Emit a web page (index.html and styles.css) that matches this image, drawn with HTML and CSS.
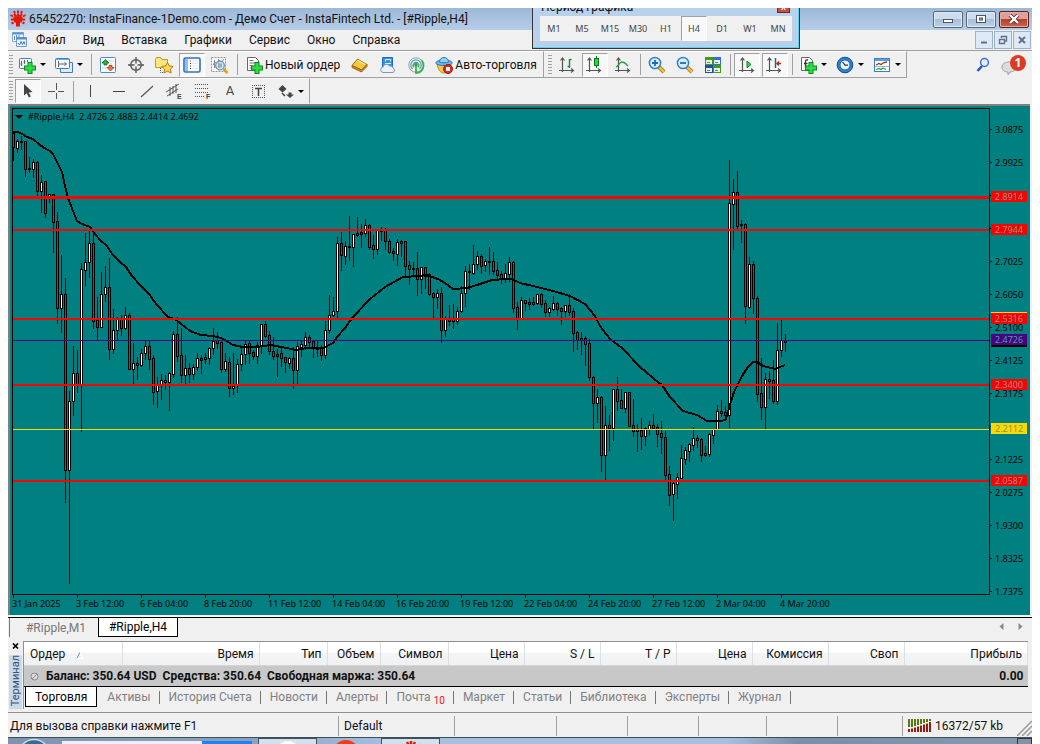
FILE: index.html
```html
<!DOCTYPE html>
<html lang="ru">
<head>
<meta charset="utf-8">
<title>InstaFinance-1Demo.com</title>
<link rel="stylesheet" href="styles.css">
</head>
<body>
<div class="app">
  <header class="titlebar">
    <svg class="logo" width="18" height="18" viewBox="0 0 18 18"><g fill="none" stroke="#e3170a" stroke-width="2"><path d="M9 4v12M4.500 7.500h3.500v9M13.500 7.500H10v9M5 4l2.500 2.500M13 4l-2.500 2.500M2 9.500h4v3M16 9.500h-4v3M2.500 13.500l2-1M15.500 13.500l-2-1M9 .5v3M5 1l1 2.500M13 1l-1 2.500M1.500 5l2.500 1.500M16.500 5L14 6.500"/></g></svg>
    <h1 class="title">65452270: InstaFinance-1Demo.com - Демо Счет - InstaFintech Ltd. - [#Ripple,H4]</h1>
    <div class="winbtns">
      <button class="wb" aria-label="Свернуть"><svg width="12" height="10" viewBox="0 0 12 10"><rect x="1.500" y="5.500" width="9" height="3" fill="#fff" stroke="#4a5666"/></svg></button>
      <button class="wb" aria-label="Развернуть"><svg width="12" height="10" viewBox="0 0 12 10"><rect x="1.500" y="1.500" width="9" height="7" fill="#fff" stroke="#4a5666"/><rect x="4.500" y="4" width="3" height="2" fill="#9bb4d0" stroke="#4a5666"/></svg></button>
      <button class="wb wb-close" aria-label="Закрыть"><svg width="12" height="10" viewBox="0 0 12 10"><path d="M2 1l8 8M10 1L2 9" stroke="#5a2a28" stroke-width="4"/><path d="M2 1l8 8M10 1L2 9" stroke="#fff" stroke-width="2.400"/></svg></button>
    </div>
  </header>

  <nav class="menubar">
    <svg width="16" height="16" viewBox="0 0 16 16"><path d="M.5.500h11v9H.5z" fill="#eef5fd" stroke="#7fa9d8"/><path d="M.5 1.500h11" stroke="#5c95d6" stroke-width="2"/><path d="M2.500 4v4M4.500 3v4M7 3v4" stroke="#6a8ab0"/><path d="M4.500 5.500h10v9h-10z" fill="#eef5fd" stroke="#6a9ad4"/><path d="M4.500 6.500h10" stroke="#4f8cd4" stroke-width="2"/><path d="M6 11l1.500 2L9 9.500l1.500 3L12 9.500l1 3" fill="none" stroke="#3f72b8"/></svg>
    <a href="#">Файл</a><a href="#">Вид</a><a href="#">Вставка</a><a href="#">Графики</a><a href="#">Сервис</a><a href="#">Окно</a><a href="#">Справка</a>
    <div class="mdibtns">
      <button class="mb" aria-label="Свернуть окно"><svg width="10" height="10" viewBox="0 0 10 10"><path d="M2 7.500h6" stroke="#5f7287" stroke-width="2"/></svg></button>
      <button class="mb" aria-label="Восстановить окно"><svg width="10" height="10" viewBox="0 0 10 10"><path d="M3.500 3V1.500h5V6H7" fill="none" stroke="#5f7287" stroke-width="1.400"/><path d="M1.500 4.500h5v4h-5z" fill="none" stroke="#5f7287" stroke-width="1.400"/></svg></button>
      <button class="mb" aria-label="Закрыть окно"><svg width="10" height="10" viewBox="0 0 10 10"><path d="M2 2l6 6M8 2L2 8" stroke="#5f7287" stroke-width="2"/></svg></button>
    </div>
  </nav>

  <div class="toolrow">
    <div class="toolbar">
      <i class="grip"></i>
      <button class="tb wide" aria-label="Новый график"><svg width="18" height="18" viewBox="0 0 18 18"><rect x="1.500" y="2.500" width="12" height="10" rx="1" fill="#f4f8fc" stroke="#3f7fc0"/><path d="M3.500 5v5M2.500 8h2M6.500 4v4M5.500 6h2M9.500 4v2" stroke="#667"/><path d="M12 6v12M6 12h12" stroke="#0a8a1e" stroke-width="5"/><path d="M12 7v10M7 12h10" stroke="#2fdc44" stroke-width="3"/></svg><i class="caret"></i></button>
      <button class="tb wide" aria-label="Профили"><svg width="18" height="18" viewBox="0 0 18 18"><path d="M5.500 16.500v-10h12v10z" fill="#dcecf9" stroke="#3f7fc0"/><rect x=".5" y="2.500" width="14" height="10" rx="1" fill="#f4f8fc" stroke="#3f7fc0"/><path d="M1 3.500h13" stroke="#6cabe6"/><path d="M3.500 5v6M3.500 8h8M9.500 6.500l2 1.500-2 1.500" stroke="#667" fill="none"/></svg><i class="caret"></i></button>
      <i class="sep"></i>
      <button class="tb" aria-label="Обзор рынка"><svg width="18" height="18" viewBox="0 0 18 18"><rect x="1.500" y="1.500" width="15" height="15" rx="1" fill="#fff" stroke="#4a8ad0"/><path d="M10 5h5M3 12h5M10 8h3" stroke="#c4d0dc"/><path d="M6.500 3.500l3.500 3.500h-2v2h-3V7H3z" fill="#28b43a" stroke="#0a7020" stroke-width=".8"/><path d="M11.500 15L8 11.500h2v-2h3v2h2z" fill="#f07848" stroke="#b03010" stroke-width=".8"/></svg></button>
      <button class="tb" aria-label="Окно данных"><svg width="18" height="18" viewBox="0 0 18 18"><circle cx="9" cy="9" r="5.300" fill="none" stroke="#555" stroke-width="1.400"/><path d="M9 1v6.500M9 10.500V17M1 9h6.500M10.500 9H17" stroke="#555" stroke-width="1.400"/></svg></button>
      <button class="tb" aria-label="Избранное"><svg width="20" height="18" viewBox="0 0 20 18"><path d="M1.500 3.500v8h9l3-2V3.500H8L6.500 1.500h-4z" fill="#ffe680" stroke="#c49a1c"/><path d="M6.500 12v4.500h3" fill="none" stroke="#555" stroke-dasharray="1 1"/><path d="M13.500 6.500l1.800 3.400 3.900.5-2.800 2.700.7 3.900-3.600-1.800L10 17l.6-3.900-2.800-2.700 3.900-.5z" fill="#ffd65a" stroke="#a87c10"/></svg></button>
      <button class="tb on" aria-label="Навигатор"><svg width="18" height="16" viewBox="0 0 18 16"><rect x="1" y="1" width="16" height="14" rx="1.500" fill="#fff" stroke="#2f6fc4" stroke-width="1.600"/><path d="M2 2h3v12H2z" fill="#8fbdf4"/><path d="M7 4h1" stroke="#d84030"/><path d="M7 6.500h1M7 9h1M7 11.500h1" stroke="#333"/><path d="M9 4h6M9 6.500h6M9 9h6M9 11.500h6" stroke="#e0e8f2"/></svg></button>
      <button class="tb" aria-label="Тестер стратегий"><svg width="20" height="18" viewBox="0 0 20 18"><rect x="1.500" y="1.500" width="14" height="14" fill="#fbfbf8" stroke="#9a9a90" stroke-dasharray="2 1"/><path d="M3 9l2-3 2 2 2-4 2 3 3-4M4.500 4v8M8.500 3v8" fill="none" stroke="#8a8f98"/><circle cx="10" cy="9.500" r="4.300" fill="#cfe8fb" fill-opacity=".8" stroke="#5f92c4" stroke-width="1.300"/><path d="M9 7v5M11 7.500v4" stroke="#667"/><path d="M13.500 13l4 4" stroke="#d8a11c" stroke-width="2.600"/></svg></button>
      <i class="sep"></i>
      <button class="tb text" aria-label="Новый ордер"><svg width="18" height="18" viewBox="0 0 18 18"><path d="M2.500 1.500h8l3 3v10h-11z" fill="#fff" stroke="#666"/><path d="M4.500 4.500h4M4.500 7h6M4.500 9.500h3M4.500 12h3" stroke="#777"/><path d="M12 6v12M6 12h12" stroke="#0a8a1e" stroke-width="5"/><path d="M12 7v10M7 12h10" stroke="#2fdc44" stroke-width="3"/></svg>Новый ордер</button>
      <button class="tb" aria-label="MetaEditor"><svg width="18" height="18" viewBox="0 0 18 18"><path d="M1 9.500L6.500 3 16 8.500 10.500 14z" fill="#f5c840" stroke="#a8780c"/><path d="M1 9.500v2l9.500 4.500 5.500-5.500v-2L10.500 14z" fill="#d08a1c" stroke="#8a5a08" stroke-width=".8"/><path d="M7 4.500l7 4" stroke="#ffe9a0" stroke-width="1.400"/></svg></button>
      <button class="tb" aria-label="Маркет"><svg width="18" height="18" viewBox="0 0 18 18"><path d="M3.500 1.500h10v10h-10z" fill="#2f92e8" stroke="#1c6cc0"/><path d="M6.500 5.500v-2h5v2M6 7.500h6" stroke="#e6f4ff" fill="none"/><path d="M4 16.500a2.800 2.800 0 010-5.500 3.500 3.500 0 016.500-1 3 3 0 013.500 2 2.400 2.400 0 010 4.500z" fill="#e9f0f8" stroke="#7f97b8"/></svg></button>
      <button class="tb" aria-label="Сигналы"><svg width="18" height="18" viewBox="0 0 18 18"><circle cx="9" cy="9" r="7.200" fill="#eef3f6" stroke="#8aa4b8"/><path d="M5.500 13a5.200 5.200 0 117 0" fill="none" stroke="#6aa0c0" stroke-width="1.300"/><path d="M7 11.300a2.800 2.800 0 114 0" fill="none" stroke="#48a060" stroke-width="1.300"/><path d="M9 9v8c4 0 7.500-3 7.500-7a8 8 0 00-2-6" fill="none" stroke="#39b54a" stroke-width="1.800"/><circle cx="9" cy="8.800" r="1.700" fill="#2f9a40"/></svg></button>
      <button class="tb text" aria-label="Авто-торговля"><svg width="18" height="18" viewBox="0 0 18 18"><path d="M2 8c1 5 3 9 7 9s7-4 7-9z" fill="#f6c94a" stroke="#b8861c"/><ellipse cx="9" cy="6.800" rx="8.200" ry="2.800" fill="#6cb6ea" stroke="#2c78b4"/><path d="M4.500 6c0-3 2-4.500 4.500-4.500S13.500 3 13.500 6c-2 1-7 1-9 0z" fill="#8fcdf5" stroke="#2c78b4"/><circle cx="13" cy="13" r="4.500" fill="#e02a18" stroke="#a81408"/><rect x="11" y="11" width="4" height="4" fill="#fff"/></svg>Авто-торговля</button>
    </div>
    <div class="toolbar tight">
      <i class="grip"></i>
      <button class="tb" aria-label="Бары"><svg width="18" height="18" viewBox="0 0 18 18"><path d="M4.500 2v14M1 14.500h14M2.500 4.500l2-2.500 2 2.500M13 12.500l2.500 2-2.500 2" fill="none" stroke="#555" stroke-width="1.200"/><path d="M11.500 3v9M11.500 3.500h2M9.500 10.500h2" stroke="#1c8a2c" stroke-width="1.400"/></svg></button>
      <button class="tb on" aria-label="Свечи"><svg width="18" height="18" viewBox="0 0 18 18"><path d="M3.500 2v14M0 14.500h14M1.500 4.500l2-2.500 2 2.500M12 12.500l2.500 2-2.500 2" fill="none" stroke="#555" stroke-width="1.200"/><path d="M10.500 0v12" stroke="#0c7a1c"/><rect x="8.500" y="2.500" width="4" height="7" fill="#2fd04a" stroke="#0c7a1c"/></svg></button>
      <button class="tb" aria-label="Линия"><svg width="18" height="18" viewBox="0 0 18 18"><path d="M4.500 2v14M1 14.500h14M2.500 4.500l2-2.500 2 2.500M13 12.500l2.500 2-2.500 2" fill="none" stroke="#555" stroke-width="1.200"/><path d="M2 11c3-1 3-5 6-5 3 0 4 2 6 4" fill="none" stroke="#2a9a3c" stroke-width="1.300"/></svg></button>
      <i class="sep"></i>
      <button class="tb" aria-label="Увеличить"><svg width="18" height="18" viewBox="0 0 18 18"><path d="M11 11l5 5" stroke="#a87a10" stroke-width="4"/><path d="M11 11l5 5" stroke="#ecc84a" stroke-width="2.400"/><circle cx="7" cy="7" r="5.600" fill="#d6edfc" stroke="#2f7fd0" stroke-width="1.500"/><path d="M4 7h6M7 4v6" stroke="#2468b4" stroke-width="1.800"/></svg></button>
      <button class="tb" aria-label="Уменьшить"><svg width="18" height="18" viewBox="0 0 18 18"><path d="M11 11l5 5" stroke="#a87a10" stroke-width="4"/><path d="M11 11l5 5" stroke="#ecc84a" stroke-width="2.400"/><circle cx="7" cy="7" r="5.600" fill="#d6edfc" stroke="#2f7fd0" stroke-width="1.500"/><path d="M4 7h6" stroke="#2468b4" stroke-width="1.800"/></svg></button>
      <button class="tb" aria-label="Мозаика"><svg width="18" height="18" viewBox="0 0 18 18"><path d="M1 1h8v8H1zM9 9h8v8H9z" fill="#3f9c14"/><path d="M9 1h8v8H9z" fill="#2f6ee0"/><path d="M1 9h8v8H1z" fill="#2348b8"/><path d="M2 4h6v4H2zM10 4h6v4h-6zM2 12h6v4H2zM10 12h6v4h-6z" fill="#e8f2e8"/><path d="M3 6.500h3M11 6.500h3M3 14.500h3M11 14.500h3" stroke="#4a9a50"/></svg></button>
      <i class="sep"></i>
      <button class="tb on" aria-label="Автопрокрутка"><svg width="18" height="18" viewBox="0 0 18 18"><path d="M4.500 2v14M1 14.500h14M2.500 4.500l2-2.500 2 2.500M13 12.500l2.500 2-2.500 2" fill="none" stroke="#555" stroke-width="1.200"/><path d="M9 5v7l4-3.500z" fill="#3ad04e" stroke="#12802a"/></svg></button>
      <button class="tb on" aria-label="Сдвиг графика"><svg width="18" height="18" viewBox="0 0 18 18"><path d="M3.500 2v14M0 14.500h14M1.500 4.500l2-2.500 2 2.500M12 12.500l2.500 2-2.500 2" fill="none" stroke="#555" stroke-width="1.200"/><path d="M9.500 2v10" stroke="#1c64a8" stroke-width="1.500"/><path d="M11 7.500h4M13 5.500l-2 2 2 2" fill="none" stroke="#b03010" stroke-width="1.500"/></svg></button>
      <i class="sep"></i>
      <button class="tb wide" aria-label="Индикаторы"><svg width="18" height="18" viewBox="0 0 18 18"><path d="M2.500 1.500h8l3 3v10h-11z" fill="#fff" stroke="#666"/><path d="M9 4c-2-.5-2.500 0-2.500 2v6M5 7.500h3.500" fill="none" stroke="#333" stroke-width="1.300"/><path d="M12 6v12M6 12h12" stroke="#0a8a1e" stroke-width="5"/><path d="M12 7v10M7 12h10" stroke="#2fdc44" stroke-width="3"/></svg><i class="caret"></i></button>
      <button class="tb wide" aria-label="Периоды"><svg width="18" height="18" viewBox="0 0 18 18"><circle cx="9" cy="9" r="7.800" fill="#2f82dc" stroke="#0f4a94"/><circle cx="9" cy="9" r="5" fill="#eef6fd" stroke="#1c5aa8"/><path d="M6.500 6L9 9.200h3" fill="none" stroke="#333" stroke-width="1.200"/></svg><i class="caret"></i></button>
      <button class="tb wide" aria-label="Шаблоны"><svg width="18" height="18" viewBox="0 0 18 18"><rect x="1.500" y="2.500" width="15" height="13" fill="#fff" stroke="#3f7fc0"/><path d="M2 4h14" stroke="#5a9de4" stroke-width="2"/><path d="M3 9l3-1.500 2 1 3-2 3-.5" fill="none" stroke="#a03018" stroke-width="1.300"/><path d="M2 10.500h14" stroke="#9ab8d8"/><path d="M3 13.500l3-1 2 1 2-1.500 3 1.500" fill="none" stroke="#2a9a3c" stroke-width="1.300"/></svg><i class="caret"></i></button>
    </div>
    <div class="rightbtns">
      <button class="tb" aria-label="Поиск"><svg width="16" height="16" viewBox="0 0 16 16"><path d="M7 9l-4.500 5" stroke="#2a58c0" stroke-width="2.600"/><circle cx="9.500" cy="5.500" r="3.900" fill="#e6f0fc" stroke="#3f6fd4" stroke-width="1.500"/></svg></button>
      <button class="tb bubble" aria-label="Уведомления"><svg width="22" height="20" viewBox="0 0 22 20"><path d="M8 7c4 0 7 2 7 5s-3 5-6 5l-2 3v-3c-4 0-6-2-6-5s3-5 7-5z" fill="#dcdcdc" stroke="#a4a4a4"/></svg><span class="badge">1</span></button>
    </div>
  </div>

  <div class="toolrow second">
    <div class="toolbar draw">
      <i class="grip"></i>
      <button class="tb on" aria-label="Курсор"><svg width="18" height="18" viewBox="0 0 18 18"><path d="M5 2v11.500l2.800-2.300 2 4.300 2-.9-2-4.200 3.700-.4z" fill="#444"/></svg></button>
      <button class="tb" aria-label="Перекрестие"><svg width="18" height="18" viewBox="0 0 18 18"><path d="M9.500 1v7M9.500 11v6M1 9.500h7M11 9.500h6" stroke="#555"/></svg></button>
      <i class="sep"></i>
      <button class="tb" aria-label="Вертикальная линия"><svg width="18" height="18" viewBox="0 0 18 18"><path d="M9.500 3v12" stroke="#444"/></svg></button>
      <button class="tb" aria-label="Горизонтальная линия"><svg width="18" height="18" viewBox="0 0 18 18"><path d="M4 9.500h12" stroke="#444"/></svg></button>
      <button class="tb" aria-label="Трендовая линия"><svg width="18" height="18" viewBox="0 0 18 18"><path d="M4 15L16 4" stroke="#555" stroke-width="1.200"/></svg></button>
      <button class="tb" aria-label="Канал"><svg width="18" height="18" viewBox="0 0 18 18"><path d="M1 10L14 2M2 14l11-7M5 5v9M8 4v8M11 2v9" stroke="#555" fill="none"/><text x="12" y="17" class="ic">E</text></svg></button>
      <button class="tb" aria-label="Фибоначчи"><svg width="18" height="18" viewBox="0 0 18 18"><path d="M2 2.500h14M2 6.500h14M2 10.500h14M2 14.500h9" stroke="#555" stroke-dasharray="1 1"/><text x="13" y="17" class="ic">F</text></svg></button>
      <button class="tb letter" aria-label="Текст">A</button>
      <button class="tb" aria-label="Метка"><svg width="18" height="18" viewBox="0 0 18 18"><path d="M3 3.500h13M3 15.500h13M3.500 3v13M15.500 3v13" fill="none" stroke="#555" stroke-dasharray="1 1"/><path d="M6 6.500h7M9.500 6v8" stroke="#444" stroke-width="1.500"/></svg></button>
      <button class="tb wide" aria-label="Стрелки"><svg width="18" height="18" viewBox="0 0 18 18"><path d="M6.500 3l4 4-4 3.500L2.500 7zM14 16l-4-3.500h2.500v-2h3v2H18z" fill="#444"/><path d="M6 11l3 3" stroke="#444" stroke-width="1.500"/></svg><i class="caret"></i></button>
    </div>
  </div>

  <main class="chart">
    <div class="plot">
      <svg class="plot-svg" id="plot" aria-label="#Ripple,H4"></svg>
      <div class="caption"><i class="caret"></i>#Ripple,H4&nbsp; 2.4726 2.4883 2.4414 2.4692</div>
    </div>
    <svg class="prices" id="prices"></svg>
    <div class="times"><span>31 Jan 2025</span><span>3 Feb 12:00</span><span>6 Feb 04:00</span><span>8 Feb 20:00</span><span>11 Feb 12:00</span><span>14 Feb 04:00</span><span>16 Feb 20:00</span><span>19 Feb 12:00</span><span>22 Feb 04:00</span><span>24 Feb 20:00</span><span>27 Feb 12:00</span><span>2 Mar 04:00</span><span>4 Mar 20:00</span></div>
  </main>

  <div class="charttabs">
    <button class="ct first">#Ripple,M1</button><button class="ct active">#Ripple,H4</button>
    <div class="scrollers"><button aria-label="Назад"><svg width="5" height="7" viewBox="0 0 5 7"><path d="M4.500 0v7L.5 3.500z" fill="#888"/></svg></button><button aria-label="Вперёд"><svg width="5" height="7" viewBox="0 0 5 7"><path d="M.5 0v7l4-3.500z" fill="#888"/></svg></button></div>
  </div>

  <section class="terminal">
    <div class="side">
      <button class="x" aria-label="Закрыть"><svg width="7" height="6" viewBox="0 0 7 6"><path d="M1 .5l5 5M6 .5l-5 5" stroke="#000" stroke-width="1.600"/></svg></button>
      <span class="vert">Терминал</span>
    </div>
    <div class="panel">
      <table class="orders">
        <colgroup><col class="w98"><col class="w137"><col class="w68"><col class="w53"><col class="w68"><col class="w76"><col class="w76"><col class="w76"><col class="w76"><col class="w76"><col class="w76"><col></colgroup>
        <thead><tr><th class="l">Ордер <svg width="7" height="8" viewBox="0 0 7 8"><path d="M1 7.500L4 1" stroke="#888"/><path d="M4 1l3 6.500H1" stroke="#fff" fill="none"/></svg></th><th>Время</th><th>Тип</th><th>Объем</th><th>Символ</th><th>Цена</th><th>S / L</th><th>T / P</th><th>Цена</th><th>Комиссия</th><th>Своп</th><th>Прибыль</th></tr></thead>
        <tbody><tr><td class="l" colspan="11"><svg width="9" height="9" viewBox="0 0 9 9"><circle cx="4.500" cy="4.500" r="3.500" fill="#ddd" stroke="#888"/><path d="M2 7l5-5" stroke="#888"/></svg>Баланс: 350.64 USD&nbsp; Средства: 350.64&nbsp; Свободная маржа: 350.64</td><td>0.00</td></tr></tbody>
      </table>
      <div class="tabs"><button class="tab active">Торговля</button><button class="tab">Активы</button><button class="tab">История Счета</button><button class="tab">Новости</button><button class="tab">Алерты</button><button class="tab">Почта<sub>10</sub></button><button class="tab">Маркет</button><button class="tab">Статьи</button><button class="tab">Библиотека</button><button class="tab">Эксперты</button><button class="tab">Журнал</button></div>
    </div>
  </section>

  <footer class="status">
    <span class="grow">Для вызова справки нажмите F1</span><span class="s116">Default</span><span class="s102"></span><span class="s71"></span><span class="s71"></span><span class="s68"></span><span class="s71"></span><span class="s66"></span>
    <span class="conn"><svg width="23" height="13" viewBox="0 0 23 13"><path d="M1 0v8M4 0v8M7 0v7M10 0v6M13 0v5M16 0v4M19 0v3M22 0v2" stroke="#567a10" stroke-width="2"/><path d="M1 10v3M4 9.500v4M7 8.500v5M10 7.500v6M13 6.500v7M16 5.500v8M19 4.500v9M22 3v10" stroke="#9a1c0c" stroke-width="2"/></svg>16372/57 kb<svg class="resize" width="15" height="16" viewBox="0 0 15 16"><path d="M0 16L15 1M5 16L15 6M10 16l5-5" stroke="#999" stroke-width="1.500"/></svg></span>
  </footer>
  <div class="taskbar">
    <svg width="32" height="7" viewBox="0 0 32 7"><circle cx="15" cy="17" r="15.500" fill="#3c6a8c" stroke="#c6dcea" stroke-width="1.500"/></svg>
    <i class="task search"></i><i class="task blue"></i>
    <i class="task light"><svg width="24" height="7" viewBox="0 0 24 7"><circle cx="12" cy="13" r="11" fill="#fff"/></svg></i>
    <i class="task plain"><svg width="24" height="7" viewBox="0 0 24 7"><circle cx="12" cy="15" r="13" fill="#f03c1c"/></svg></i>
    <i class="task light"><svg width="20" height="7" viewBox="0 0 20 7"><path d="M10 2v5M6 3l2 4M14 3l-2 4M1 6l4 1M19 6l-4 1" stroke="#e3170a" stroke-width="2.500"/></svg></i>
    <i class="peek"></i>
  </div>

  <aside class="palette">
    <div class="palette-title">Период графика</div>
    <button class="palette-x" aria-label="Закрыть">x</button>
    <div class="periods"><button>M1</button><button>M5</button><button>M15</button><button>M30</button><button>H1</button><button class="on">H4</button><button>D1</button><button>W1</button><button>MN</button></div>
  </aside>
</div>
<script src="chart.js"></script>
</body>
</html>
```
FILE: styles.css
```css
* { box-sizing: border-box; }
html { height: 100%; overflow: hidden; background: #fff; }
body { margin: 8px 8px 0; font: 12px/16px Roboto, "Noto Sans", sans-serif; color: #111; }
button { font: inherit; color: inherit; background: none; border: 0; padding: 0; margin: 0; }
a { color: inherit; text-decoration: none; }
svg { display: block; flex: none; }
i { display: block; flex: none; }

.app { position: relative; background: #f0f0f0; }

.titlebar { display: flex; align-items: center; height: 22px; background: linear-gradient(#9db8d6, #b6cde8); }
.logo { margin-left: 1px; }
.title { margin: 0 0 0 2px; font-size: 12px; font-weight: 400; white-space: nowrap; flex: 1; }
.winbtns { display: flex; gap: 3px; margin-right: 3px; }
.wb { display: flex; align-items: center; justify-content: center; width: 30px; height: 17px; border: 1px solid #56687c; border-radius: 2px; background: linear-gradient(#cddced 45%, #a9bfd8 50%, #bcd2ea); box-shadow: inset 0 0 0 1px #dfeaf6; }
.wb-close { background: linear-gradient(#dfa095 45%, #b5402e 50%, #c9654f); border-color: #5c1f1a; box-shadow: inset 0 0 0 1px #e4ada4; }

.menubar { display: flex; align-items: center; height: 21px; border-bottom: 1px solid #a0a0a0; padding-left: 4px; }
.menubar a { margin-left: 17px; }
.menubar svg + a { margin-left: 8px; }
.mdibtns { display: flex; gap: 1px; margin: 0 1px 0 auto; }
.mb { display: flex; align-items: center; justify-content: center; width: 18px; height: 18px; border: 1px solid #9fb3c6; background: #dde9f5; }

.toolrow { display: flex; height: 27px; background: #f0f0f0; }
.second { height: 26px; }
.toolbar { display: flex; align-items: center; height: 27px; border: solid #a0a0a0; border-width: 0 1px 1px 0; border-top: 1px solid #fff; }
.draw { height: 26px; border-bottom-color: #f0f0f0; }
.grip { width: 4px; height: 20px; margin: 0 1px; background: repeating-linear-gradient(#a0a0a0 0 1px, #f0f0f0 1px 3px); }
.tight .grip { margin-left: 4px; }
.sep { width: 1px; height: 21px; margin: 0 2px 0 3px; background: #a0a0a0; }
.tb { display: flex; align-items: center; justify-content: center; width: 26px; height: 24px; margin: 0 1px; white-space: nowrap; }
.tb.on, .periods .on { border: 1px solid; border-color: #a0a0a0 #fff #fff #a0a0a0; background: #f8f8f8; }
.tb.wide { width: 35px; gap: 4px; justify-content: flex-start; padding-left: 3px; }
.tb.text { width: auto; padding: 0 5px 0 4px; gap: 2px; }
.letter { font-size: 13px; color: #444; }
.caret { width: 0; height: 0; border: solid transparent; border-width: 3px 3px 0; border-top-color: #000; }
.ic { font: 700 7px "Liberation Sans", sans-serif; fill: #444; }
.rightbtns { display: flex; margin-left: auto; margin-right: 5px; align-items: center; }
.bubble { position: relative; width: 28px; }
.badge { position: absolute; right: 0; top: 2px; width: 16px; height: 16px; border-radius: 50%; background: #dd3a24; color: #fff; font: 700 12px/16px "Noto Sans", sans-serif; text-align: center; }

.chart { display: grid; grid-template-columns: 1fr 40px; background: #008080; padding: 2px 0 0 2px; border: solid #808080; border-width: 2px 0 0 2px; margin-right: 2px; font-family: "Noto Sans", sans-serif; font-size: 9px; color: #000; }
.plot { position: relative; height: 487px; min-width: 0; overflow: hidden; }
.plot-svg { width: 100%; height: 487px; border: 1px solid #000; }
.caption { position: absolute; left: 3px; top: 2px; display: flex; align-items: center; gap: 5px; line-height: 13px; }
.caption .caret { border-width: 4px 4px 0; }
.prices { width: 40px; height: 487px; overflow: visible; font-size: 9px; }
.times { grid-column: 1 / 3; display: flex; height: 20px; overflow: hidden; }
.times span { flex: none; width: 64px; line-height: 18px; white-space: nowrap; background: linear-gradient(#000, #000) 1px 0 / 1px 3px no-repeat; }

.charttabs { display: flex; height: 24px; border-top: 1px solid #000; box-shadow: 0 -1px #fff; margin-top: 2px; }
.ct { width: 80px; height: 19px; color: #777; }
.ct.first { width: 89px; margin-left: 1px; padding-left: 4px; border-left: 1px solid #777; }
.ct.active { background: #fff; color: #000; border: solid #000; border-width: 0 1px 1px; }
.scrollers { display: flex; gap: 14px; margin: 0 9px 7px auto; align-items: center; }

.terminal { display: flex; height: 68px; }
.side { width: 15px; display: flex; flex-direction: column; align-items: center; flex: none; }
.x { height: 11px; display: flex; align-items: center; }
.vert { writing-mode: vertical-rl; transform: rotate(180deg); flex: 1; width: 13px; background: #c9daec; color: #3c5270; font-size: 11px; line-height: 13px; text-align: left; padding-top: 3px; margin-top: 4px; }
.panel { flex: 1; min-width: 0; margin-right: 4px; border: solid #909090; border-width: 1px 0 0 1px; }
.orders { width: 100%; table-layout: fixed; border-collapse: collapse; }
.w98 { width: 98px; } .w137 { width: 137px; } .w68 { width: 68px; } .w53 { width: 53px; } .w76 { width: 76px; }
.orders th { height: 23px; padding: 2px 5px 0 0; font-weight: 400; text-align: right; background: linear-gradient(#fff 45%, #f3f4f6 50%, #f0f1f3); border-right: 1px solid #dcdfe4; border-bottom: 1px solid #d5d5d5; white-space: nowrap; }
.orders td { height: 21px; padding: 0 4px 0 0; font-weight: 700; text-align: right; background: #c8c8c8; white-space: nowrap; }
.orders .l { text-align: left; padding-left: 6px; }
.orders .l svg { display: inline-block; margin: 0 7px 0 8px; vertical-align: -1px; }
.orders td.l svg { margin-left: 0; }
.tabs { display: flex; border-top: 1px solid #000; height: 22px; align-items: flex-start; }
.tab { display: flex; align-items: center; padding: 0 9px; height: 20px; color: #808080; white-space: nowrap; }
.tab:not(.active) { background: linear-gradient(#777, #777) right 4px / 1px 13px no-repeat; }
.tab.active { color: #000; background: #fff; border: solid #000; border-width: 0 1px 1px; margin: 0 1px; padding: 0 9px; }
.tab sub { color: #f01010; font-size: 10px; line-height: 10px; margin: 7px 0 0 3px; }

.status { display: flex; align-items: stretch; height: 25px; padding: 3px 0 1px; border-top: 1px solid #909090; margin-top: 3px; }
.status > span { border-left: 1px solid #a0a0a0; padding: 2px 0 0 5px; flex: none; white-space: nowrap; }
.status .grow { flex: 1; border: 0; padding-left: 2px; min-width: 0; }
.s116 { width: 116px; } .s102 { width: 102px; } .s71 { width: 71px; } .s68 { width: 68px; } .s66 { width: 65px; }
.status .conn { display: flex; gap: 4px; width: 130px; align-items: flex-start; }
.conn svg:first-child { margin-top: 1px; }
.resize { margin: 2px 0 0 auto; }

.taskbar { display: flex; height: 10px; border-top: 1px solid #3c5058; background: linear-gradient(90deg, #7d93b0 0, #8aa2c0 240px, #a4c0de 380px, #a4c0de 720px, #7a8fa8 790px, #8598b0); padding-left: 11px; align-items: flex-start; }
.task { height: 10px; display: flex; justify-content: center; }
.search { width: 140px; margin: 3px 0 0 11px; background: #eef0f3; }
.blue { width: 50px; margin-top: 3px; background: #1c82f5; }
.light { width: 59px; margin-left: 6px; border: 1px solid #40505c; background: #d3e0ee; }
.plain { width: 58px; }
.peek { width: 15px; height: 10px; margin-left: auto; border: 1px solid #334; background: #8492a6; }

.palette { position: absolute; left: 524px; top: 0; width: 268px; height: 41px; overflow: hidden; background: #b9d1ea; border: 1px solid #333; border-top: 0; box-shadow: inset -1px -1px #55d3f0; }
.palette-title { position: absolute; left: 8px; top: -9px; }
.palette-x { position: absolute; right: 9px; top: -8px; width: 13px; height: 13px; background: #c9503c; border: 1px solid #6a2a24; color: #fff; font-size: 10px; line-height: 9px; }
.periods { display: flex; margin: 8px 7px 0; height: 25px; background: #f0f0f0; font-family: "Noto Sans", sans-serif; }
.periods button { width: 28px; font-size: 9px; line-height: 12px; color: #444; padding: 0; }
.periods .on { width: 26px; margin: 0 1px; }
```
FILE: chart.js
```js
// Each candle: high, body top, body bottom, low, kind (r = down, w = up).
const candles = `132,133,147,160,r 139,141,148,152,w 136,141,142,149,r 141,141,169,176,r 157,168,169,172,r 159,162,169,177,w 161,162,191,195,r 175,182,191,212,w 181,181,213,217,r 194,194,197,202,w
194,194,222,252,r 212,221,308,323,r 255,294,308,332,w 278,294,470,502,r 391,401,470,583,w 346,373,401,415,w 350,373,385,392,r 263,269,385,431,w 233,262,270,285,w 231,243,262,277,w
233,243,321,328,r 297,320,327,340,r 272,294,327,327,w 266,287,294,301,w 258,287,349,359,r 309,330,349,353,w 317,319,330,340,w 315,318,328,335,r 307,315,328,329,w 313,315,369,369,r
343,363,369,385,w 357,363,365,379,r 349,353,365,366,w 341,346,353,359,w 341,346,359,369,r 355,358,392,404,r 377,385,391,407,w 374,380,385,399,w 375,380,382,389,r 372,373,382,410,w
331,334,374,377,w 317,334,356,361,r 328,355,375,382,r 355,368,375,383,w 363,368,374,382,r 364,367,374,379,w 353,358,367,370,w 355,358,360,373,r 353,357,359,363,r 347,348,358,364,w
328,341,348,354,w 332,340,343,348,r 341,342,369,372,r 353,361,369,371,w 357,362,388,396,r 353,386,388,394,w 359,364,385,392,w 347,354,364,370,w 341,344,354,364,w 341,343,353,363,r
350,352,356,359,r 342,345,356,363,w 324,324,345,353,w 321,324,336,337,r 331,335,351,354,r 337,351,356,359,r 349,354,356,376,r 348,353,358,366,r 357,357,362,372,r 357,358,363,368,w
347,358,370,388,r 342,346,370,385,w 341,344,347,356,w 332,337,345,349,w 335,337,342,346,r 340,341,348,357,r 341,347,349,356,r 345,348,355,360,r 321,330,355,358,w 295,315,330,333,w
297,311,315,316,w 237,243,311,318,w 232,243,255,270,r 241,246,256,264,w 216,246,247,260,r 234,234,247,266,w 217,233,235,236,r 224,232,234,247,r 219,225,233,236,w 224,225,247,249,r
235,245,249,258,r 230,230,249,254,w 227,230,231,240,r 228,230,241,249,r 239,241,252,253,r 248,251,253,260,r 239,242,254,265,w 240,241,243,256,r 241,241,266,276,r 261,265,269,284,r
262,268,269,274,r 252,268,279,295,r 267,267,279,293,w 267,267,276,288,r 273,274,294,295,r 292,293,297,317,r 289,293,297,308,w 287,293,330,342,r 316,319,330,336,w 305,319,321,325,r
304,319,321,328,r 307,311,321,324,w 286,293,311,312,w 266,271,293,306,w 264,271,272,289,r 245,264,273,274,w 251,256,264,269,w 254,256,266,273,r 259,261,265,271,w 247,261,262,274,r
252,261,271,274,r 262,270,275,279,r 271,274,279,283,r 264,273,279,282,w 257,262,274,281,w 261,262,308,312,r 302,307,319,329,r 297,300,318,319,w 300,300,303,310,r 298,302,304,309,r
297,302,304,305,r 294,294,303,304,w 293,294,304,307,r 300,303,312,316,r 307,308,312,316,w 296,303,309,310,w 302,303,309,315,r 307,308,311,324,r 305,305,311,316,w 294,305,312,315,r
308,311,333,351,r 331,332,340,349,r 332,338,340,354,r 336,338,344,365,r 339,343,377,380,r 376,377,403,429,r 389,397,403,422,w 396,397,455,471,r 406,425,455,480,w 415,425,428,450,r
389,389,428,440,w 377,389,401,410,r 389,400,408,408,r 392,392,408,412,w 392,392,426,426,r 399,425,431,436,r 424,429,431,451,r 418,430,436,449,r 427,428,436,445,w 421,425,429,434,w
414,425,428,429,r 424,427,434,446,r 421,433,437,453,r 431,437,475,480,r 466,474,495,505,r 480,483,494,520,w 473,477,484,498,w 445,458,478,478,w 447,450,459,464,w 443,444,451,461,w
427,438,445,450,w 435,438,440,447,r 438,439,455,461,r 446,453,455,456,r 433,434,454,456,w 429,429,435,443,w 405,411,429,429,w 400,411,413,416,r 406,412,415,420,r 160,203,415,427,w
179,192,204,249,w 171,192,226,229,r 220,224,225,242,r 223,224,306,323,r 257,264,307,308,w 261,264,298,313,r 296,298,394,401,r 358,393,407,419,r 373,379,407,429,w 371,379,381,398,r
360,380,401,403,r 323,350,401,404,w 320,340,350,356,w 334,340,342,351,r`.split(/\s+/).map(c => c.split(','));

const average = '13,132 18,132 22,134 27,137 33,139 40,145 46,149 50,151 53,154 57,162 62,172 65,186 68,198 73,211 77,221 82,224 90,227 95,234 101,241 106,245 113,255 120,262 126,267 132,276 140,285 149,294 157,305 168,317 175,319 180,323 190,331 201,335 213,336 221,338 228,342 233,345 243,347 257,347 270,345 287,348 295,350 307,348 323,348 333,343 337,337 345,328 353,317 370,299 385,287 403,277 420,276 426,275 438,279 445,283 453,289 467,288 480,284 492,280 507,279 512,279 520,283 537,287 553,291 570,296 585,304 595,316 600,326 610,339 622,348 640,367 659,383 662,385 670,397 683,411 697,415 707,421 722,421 726,419 729,408 734,392 742,376 748,367 753,362 757,362 763,366 775,369 785,365';

const levels = [
  [196, 3, '#ff0000'], [229, 2, '#ff0000'], [318, 2, '#ff0000'], [340, 1, '#4b0082'],
  [384, 2, '#ff0000'], [429, 1, '#ffd700'], [480, 2, '#ff0000']
];

let out = '<g transform="translate(-13,-109)" shape-rendering="crispEdges">';
candles.forEach(([high, top, bottom, low, kind], i) => {
  const x = 13 + 4 * i;
  out += `<rect x="${x}" y="${high}" width="1" height="${low - high + 1}" fill="#000"/>`;
  out += `<rect x="${x - 1}" y="${top}" width="3" height="${bottom - top + 1}" fill="#000"/>`;
  if (bottom - top > 1) {
    out += `<rect x="${x}" y="${+top + 1}" width="1" height="${bottom - top - 1}" fill="${kind === 'w' ? '#fff' : '#e01818'}"/>`;
  }
});
out += `<polyline points="${average}" fill="none" stroke="#000" stroke-width="2" stroke-linejoin="round"/></g>`;
levels.forEach(([y, h, color]) => {
  out += `<rect x="0" y="${y - 109}" width="100%" height="${h}" fill="${color}" shape-rendering="crispEdges"/>`;
});
document.getElementById('plot').innerHTML = out;

// Price scale: plain grid values, then the coloured level tags above them.
let scale = '';
['3.0875', '2.9925', '', '', '2.7025', '2.6050', '2.5100', '2.4125', '2.3175', '', '2.1225', '2.0275', '1.9300', '1.8325', '1.7375'].forEach((label, i) => {
  const y = 21 + 33 * i;
  scale += `<rect x="0" y="${y}" width="2" height="1"/><text x="5" y="${y + 4}">${label}</text>`;
});
scale += '<rect x="1" y="204" width="36" height="3" fill="#ffd700"/><rect x="1" y="236" width="36" height="3"/>';
[
  ['2.8914', 83, '#ff0000', '#9a8f88'], ['2.7944', 116, '#ff0000', '#9a8f88'], ['2.5316', 205, '#ff0000', '#9a8f88'],
  ['2.4726', 226, '#4b0082', '#3aa0a8'], ['2.3400', 271, '#ff0000', '#9a8f88'], ['2.2112', 315, '#ffd700', '#7a9a58'],
  ['2.0587', 367, '#ff0000', '#9a8f88']
].forEach(([label, y, fill, color]) => {
  scale += `<rect x="1" y="${y}" width="36" height="11" fill="${fill}"/><text x="5" y="${y + 9}" fill="${color}">${label}</text>`;
});
document.getElementById('prices').innerHTML = scale;
```
